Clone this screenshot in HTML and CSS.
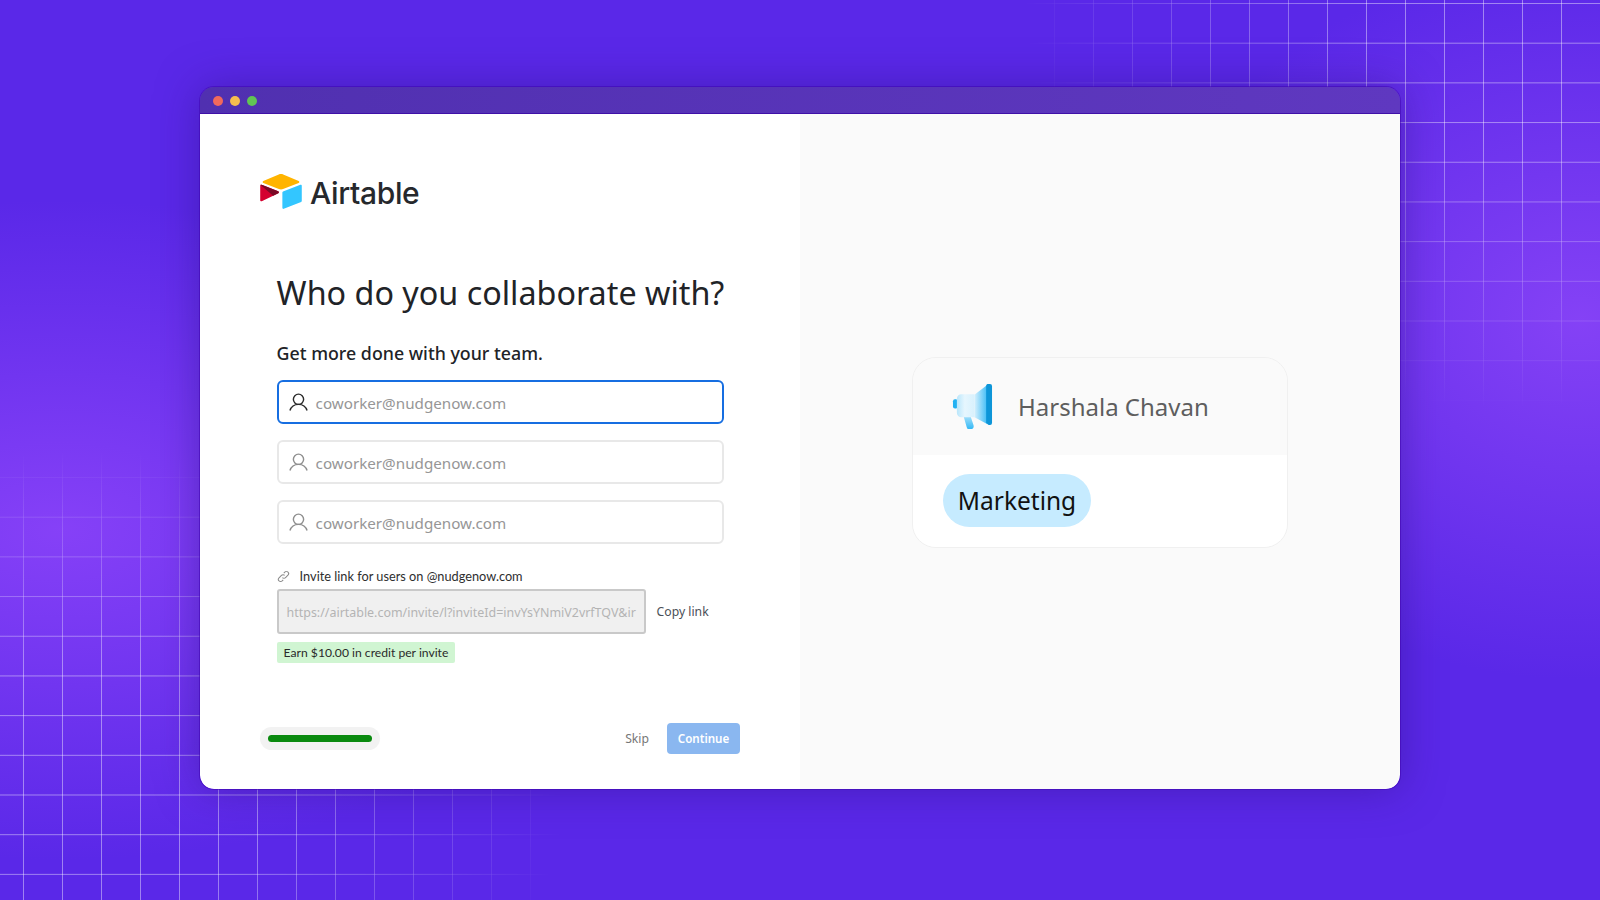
FILE: index.html
```html
<!DOCTYPE html>
<html lang="en">
<head>
<meta charset="utf-8">
<title>Airtable onboarding</title>
<link rel="stylesheet" href="styles.css">
</head>
<body>
<div class="stage">
  <div class="grid grid-tr"></div>
  <div class="grid grid-bl"></div>
  <div class="window">
    <div class="titlebar">
      <span class="dot dot-red"></span>
      <span class="dot dot-yellow"></span>
      <span class="dot dot-green"></span>
    </div>
    <div class="content">
      <section class="left">
        <div class="brand">
          <svg class="logo" viewBox="11 10 177 149" aria-hidden="true">
            <path fill="#ffb400" d="M90.04 12.37L24.08 39.66C20.41 41.18 20.45 46.39 24.14 47.85L90.38 74.12C96.2 76.43 102.68 76.43 108.5 74.12L174.73 47.85C178.42 46.39 178.46 41.18 174.79 39.66L108.83 12.37C102.82 9.88 96.06 9.88 90.04 12.37"/>
            <path fill="#33c6ff" d="M105.31 88.46V154.08C105.31 157.2 108.46 159.33 111.36 158.18L185.17 129.54C186.85 128.87 187.96 127.24 187.96 125.43V59.81C187.96 56.69 184.81 54.55 181.91 55.7L108.1 84.35C106.42 85.02 105.31 86.65 105.31 88.46"/>
            <path fill="#d4002f" d="M88.08 91.85L66.17 102.42L63.95 103.5L17.71 125.65C14.78 127.07 11.04 124.93 11.04 121.67V60.09C11.04 58.91 11.64 57.89 12.45 57.13C12.79 56.79 13.18 56.51 13.57 56.29C14.68 55.63 16.25 55.45 17.59 55.98L87.71 83.76C91.27 85.17 91.55 90.17 88.08 91.85"/>
            <path fill="#7a0a26" d="M88.08 91.85L66.17 102.42L12.45 57.13C12.79 56.79 13.18 56.51 13.57 56.29C14.68 55.63 16.25 55.45 17.59 55.98L87.71 83.76C91.27 85.17 91.55 90.17 88.08 91.85"/>
          </svg>
          <span class="wordmark">Airtable</span>
        </div>
        <div class="form">
          <h1 class="title">Who do you collaborate with?</h1>
          <p class="subtitle">Get more done with your team.</p>
          <div class="fields">
            <div class="field field-active">
              <svg class="person" viewBox="0 0 20 20" aria-hidden="true"><circle cx="10" cy="6.6" r="5.4"/><path d="M1 18.5C2.2 14.6 5.6 12 10 12s7.800 2.600 9 6.500"/></svg>
              <span class="placeholder">coworker@nudgenow.com</span>
            </div>
            <div class="field">
              <svg class="person" viewBox="0 0 20 20" aria-hidden="true"><circle cx="10" cy="6.6" r="5.4"/><path d="M1 18.5C2.2 14.6 5.6 12 10 12s7.800 2.600 9 6.500"/></svg>
              <span class="placeholder">coworker@nudgenow.com</span>
            </div>
            <div class="field">
              <svg class="person" viewBox="0 0 20 20" aria-hidden="true"><circle cx="10" cy="6.6" r="5.4"/><path d="M1 18.5C2.2 14.6 5.6 12 10 12s7.800 2.600 9 6.500"/></svg>
              <span class="placeholder">coworker@nudgenow.com</span>
            </div>
          </div>
          <div class="invite-label">
            <svg class="chain" viewBox="0 0 14 14" aria-hidden="true"><path d="M5.800 8.200a2.400 2.400 0 0 0 3.400 0l2.600-2.600a2.400 2.400 0 0 0-3.400-3.400L7.300 3.300"/><path d="M8.200 5.800a2.400 2.400 0 0 0-3.400 0L2.200 8.400a2.400 2.400 0 0 0 3.400 3.400l1.100-1.100"/></svg>
            <span>Invite link for users on @nudgenow.com</span>
          </div>
          <div class="invite-row">
            <div class="link-box"><span class="link-text">https://airtable.com/invite/l?inviteId=invYsYNmiV2vrfTQV&amp;ir</span></div>
            <span class="copy">Copy link</span>
          </div>
          <span class="credit">Earn $10.00 in credit per invite</span>
        </div>
        <div class="footer">
          <div class="progress"><div class="progress-fill"></div></div>
          <div class="actions">
            <span class="skip">Skip</span>
            <span class="continue">Continue</span>
          </div>
        </div>
      </section>
      <section class="right">
        <div class="card">
          <div class="card-head">
            <svg class="megaphone" viewBox="0 0 42 46" aria-hidden="true">
              <defs>
                <linearGradient id="mgBody" x1="0" x2="1" y1="0" y2="0"><stop offset="0" stop-color="#b9e6fb"/><stop offset="0.45" stop-color="#e6f6fe"/><stop offset="1" stop-color="#d8f1fd"/></linearGradient>
                <linearGradient id="mgCone" x1="0" x2="1" y1="0" y2="0"><stop offset="0" stop-color="#d6f0fd"/><stop offset="1" stop-color="#41bdf6"/></linearGradient>
                <linearGradient id="mgHandle" x1="0" x2="0" y1="0" y2="1"><stop offset="0" stop-color="#bde8fc"/><stop offset="1" stop-color="#2fb7f5"/></linearGradient>
              </defs>
              <rect x="1" y="15.500" width="5" height="9.500" rx="2" fill="#22b1f2"/>
              <path fill="url(#mgHandle)" d="M11 30h7l4 12a3.600 3.600 0 0 1-7 2z"/>
              <path fill="url(#mgBody)" d="M5 15a4.500 4.500 0 0 1 4.500-4.500H23V34H9.500A4.500 4.500 0 0 1 5 29.500z"/>
              <path fill="url(#mgCone)" d="M23 11L36 1v40L23 34z"/>
              <path fill="#0d95d8" d="M35 2C35 .6 36 0 37 0h2a2 2 0 0 1 2 2v38a2 2 0 0 1-2 2h-1.500L35 40z"/>
            </svg>
            <span class="person-name">Harshala Chavan</span>
          </div>
          <div class="card-body">
            <span class="pill">Marketing</span>
          </div>
        </div>
      </section>
    </div>
  </div>
</div>
</body>
</html>
```

FILE: styles.css
```css
* { box-sizing: border-box; }
html, body { margin: 0; padding: 0; width: 100%; height: 100%; overflow: hidden; }
body { font-family: "Noto Sans", "Open Sans", sans-serif; }

.stage {
  position: relative;
  width: 1600px;
  height: 900px;
  padding: 87px 200px 0;
  overflow: hidden;
  background-color: #5a28e8;
  background-image:
    radial-gradient(ellipse 440px 360px at 1580px 320px, rgba(140, 70, 248, 0.85), rgba(140, 70, 248, 0) 100%),
    radial-gradient(ellipse 580px 330px at 60px 530px, rgba(136, 66, 248, 0.95), rgba(136, 66, 248, 0) 100%);
}

.grid {
  position: absolute;
  background-image:
    linear-gradient(to right, rgba(255, 255, 255, 0.42) 1px, transparent 1px),
    linear-gradient(to bottom, rgba(255, 255, 255, 0.42) 1px, transparent 1px);
  background-size: 39px 39.7px;
}
.grid-tr {
  top: 0;
  left: 980px;
  width: 620px;
  height: 440px;
  background-position: 35px 3px;
  -webkit-mask-image: radial-gradient(ellipse 500px 400px at 85% 5%, #000 30%, transparent 97%);
  mask-image: radial-gradient(ellipse 500px 400px at 85% 5%, #000 30%, transparent 97%);
}
.grid-bl {
  top: 440px;
  left: 0;
  width: 560px;
  height: 460px;
  background-position: 23px 37px;
  -webkit-mask-image: radial-gradient(ellipse 500px 350px at 15% 76%, #000 35%, transparent 97%);
  mask-image: radial-gradient(ellipse 500px 350px at 15% 76%, #000 35%, transparent 97%);
}

.window {
  position: relative;
  width: 1200px;
  height: 702px;
  display: flex;
  flex-direction: column;
  border-radius: 14px;
  box-shadow: 0 0 42px rgba(50, 20, 140, 0.5), 0 0 0 1px rgba(70, 0, 190, 0.55);
  overflow: hidden;
}

.titlebar {
  height: 27px;
  flex: none;
  display: flex;
  align-items: center;
  gap: 7px;
  padding: 2px 0 0 13px;
  background: linear-gradient(to right, #5030b0, #5f38c0);
  border-bottom: 1px solid #3f10a8;
}
.dot { width: 10px; height: 10px; border-radius: 50%; }
.dot-red { background: #f1695c; }
.dot-yellow { background: #f5bd4f; }
.dot-green { background: #61c454; }

.content { flex: 1; display: flex; min-height: 0; border-radius: 0 0 14px 14px; overflow: hidden; }

.left {
  width: 600px;
  background: #fff;
  padding: 60px 60px 0;
  display: flex;
  flex-direction: column;
}
.right {
  width: 600px;
  background: #fafafa;
  display: flex;
  flex-direction: column;
  padding: 243px 0 0 112px;
}

.brand { display: flex; align-items: center; gap: 8px; height: 35px; }
.logo { width: 42px; height: 35px; flex: none; }
.wordmark {
  font-family: Inter, "Liberation Sans", sans-serif;
  font-size: 30px;
  font-weight: 550;
  letter-spacing: -0.35px;
  color: #26282c;
  line-height: 35px;
  position: relative;
  top: 2px;
}

.form { margin: 61px 0 0 16.6px; width: 447px; display: flex; flex-direction: column; align-items: flex-start; }
.title {
  margin: 0;
  font-size: 32.3px;
  line-height: 44px;
  font-weight: 450;
  color: #212327;
  white-space: nowrap;
}
.subtitle {
  margin: 26px 0 0;
  font-size: 17.8px;
  line-height: 26px;
  font-weight: 500;
  color: #212327;
  white-space: nowrap;
}
.fields { margin-top: 14px; width: 447px; display: flex; flex-direction: column; gap: 16px; }
.field {
  height: 44px;
  display: flex;
  align-items: center;
  gap: 8px;
  padding: 0 10px;
  border: 2px solid #e8e8e8;
  border-radius: 6px;
  background: #fff;
}
.field-active { border-color: #166ee1; }
.person { width: 19px; height: 19px; flex: none; fill: none; stroke: #8f8f8f; stroke-width: 1.5; }
.field-active .person { stroke: #2a2a2a; }
.placeholder { font-size: 15.2px; color: #969696; line-height: 22px; position: relative; top: 1px; }

.invite-label {
  margin-top: 23px;
  height: 18px;
  display: flex;
  align-items: center;
  gap: 10px;
  font-family: Lato, sans-serif;
  font-size: 12.75px;
  color: #2e2e2e;
}
.chain { width: 13px; height: 13px; flex: none; fill: none; stroke: #8a8a8a; stroke-width: 1.1; }

.invite-row { margin-top: 4px; width: 447px; display: flex; align-items: center; gap: 11px; }
.link-box {
  width: 369px;
  flex: none;
  height: 45px;
  display: flex;
  align-items: center;
  padding: 2px 8px 0;
  background: #f0f0f0;
  border: 2px solid #c9c9c9;
  border-radius: 3px;
}
.link-text { font-size: 12.45px; color: #b4b4b4; white-space: nowrap; }
.copy { font-size: 12.2px; color: #4a4f57; }

.credit {
  margin-top: 8px;
  height: 21px;
  padding: 0 7px;
  display: flex;
  align-items: center;
  background: #d0f5d2;
  border-radius: 2px;
  font-family: Lato, sans-serif;
  font-size: 12.15px;
  color: #2a2a2a;
  white-space: nowrap;
}

.footer {
  margin-top: 60px;
  display: flex;
  align-items: center;
  justify-content: space-between;
}
.progress {
  width: 120px;
  height: 23px;
  padding: 8px 8px;
  border-radius: 12px;
  background: #f2f2f2;
}
.progress-fill { height: 7px; border-radius: 4px; background: #0a8a0f; }
.actions { display: flex; align-items: center; gap: 18px; }
.skip { font-size: 12.2px; color: #777; }
.continue {
  width: 73px;
  height: 31px;
  display: flex;
  align-items: center;
  justify-content: center;
  background: #8ab7f0;
  border-radius: 4px;
  color: #fff;
  font-size: 11.6px;
  font-weight: 600;
}

.card {
  width: 376px;
  height: 191px;
  border: 1px solid #f0f0f0;
  border-radius: 24px;
  overflow: hidden;
  display: flex;
  flex-direction: column;
}
.card-head {
  height: 97px;
  flex: none;
  display: flex;
  align-items: center;
  gap: 25px;
  padding: 0 0 0 39px;
  background: #fafafa;
}
.megaphone { width: 41px; height: 45px; flex: none; }
.person-name { font-size: 24px; color: #5e5e5e; line-height: 32px; }
.card-body { flex: 1; background: #fff; padding: 19px 0 0 30px; }
.pill {
  display: inline-flex;
  align-items: center;
  justify-content: center;
  width: 148px;
  height: 53px;
  border-radius: 27px;
  background: #c6ebff;
  font-size: 24.5px;
  color: #111;
}
```
